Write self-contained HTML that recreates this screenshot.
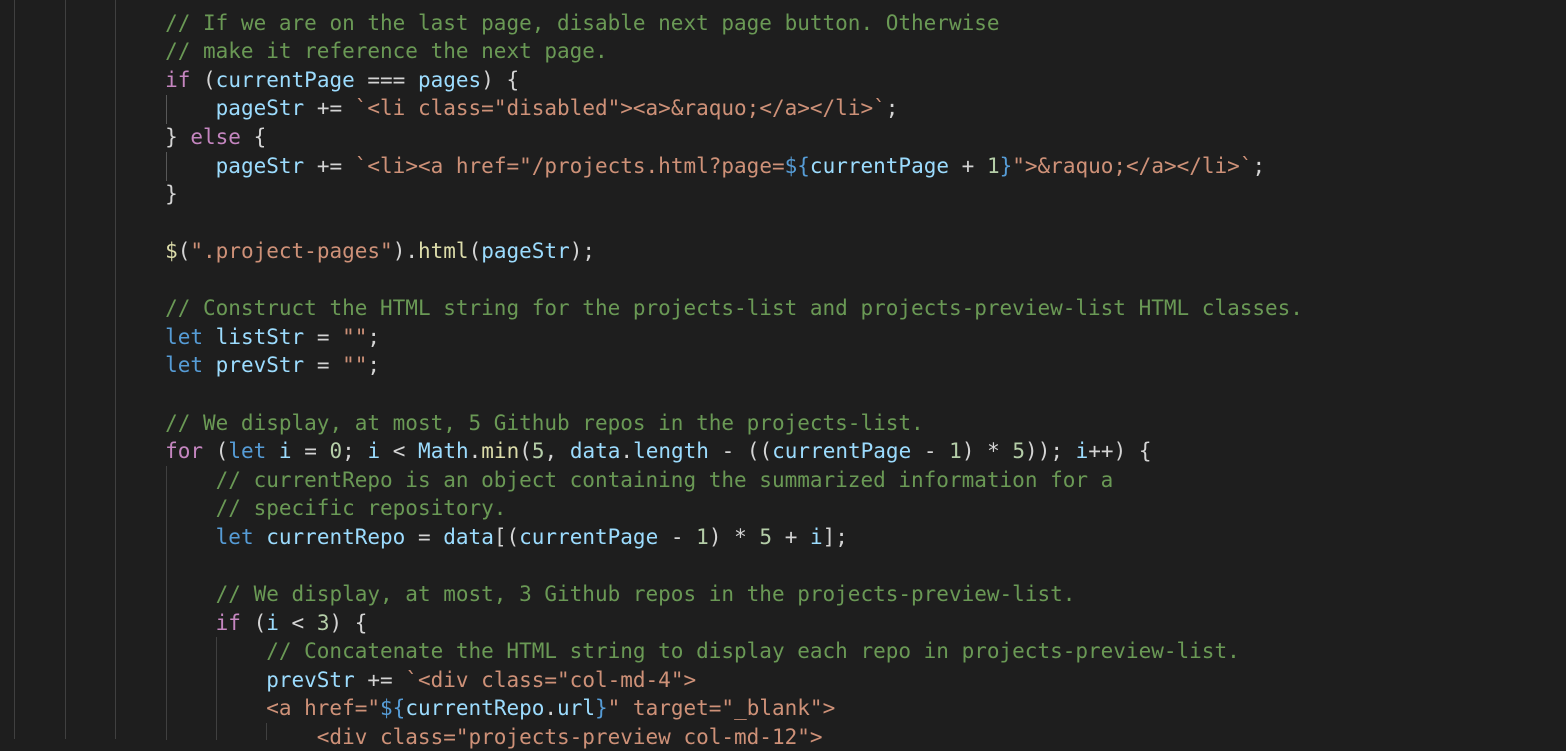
<!DOCTYPE html>
<html><head><meta charset="utf-8"><style>
html,body{margin:0;padding:0;background:#1e1e1e;width:1566px;height:739px;overflow:hidden}
.g{position:absolute;width:1px;background:#404040}
pre{position:absolute;left:114.5px;top:8.7px;margin:0;font-family:"DejaVu Sans Mono","Liberation Mono",monospace;font-size:21px;line-height:28.57px;color:#d4d4d4;white-space:pre}
.c{color:#6a9955}.k{color:#c586c0}.b{color:#569cd6}.v{color:#9cdcfe}.s{color:#ce9178}.f{color:#dcdcaa}.n{color:#b5cea8}
</style></head><body>
<div class="g" style="left:14px;top:0;height:739px"></div>
<div class="g" style="left:65px;top:0;height:739px"></div>
<div class="g" style="left:115px;top:0;height:739px"></div>
<div class="g" style="left:166px;top:95px;height:29px;background:#585858"></div>
<div class="g" style="left:166px;top:152px;height:29px;background:#585858"></div>
<div class="g" style="left:166px;top:466px;height:274px"></div>
<div class="g" style="left:216px;top:637px;height:103px"></div>
<div class="g" style="left:266px;top:723px;height:17px"></div>
<pre>    <span class="c">// If we are on the last page, disable next page button. Otherwise</span>
    <span class="c">// make it reference the next page.</span>
    <span class="k">if</span> (<span class="v">currentPage</span> === <span class="v">pages</span>) {
        <span class="v">pageStr</span> += <span class="s">`&lt;li class="disabled"&gt;&lt;a&gt;&amp;raquo;&lt;/a&gt;&lt;/li&gt;`</span>;
    } <span class="k">else</span> {
        <span class="v">pageStr</span> += <span class="s">`&lt;li&gt;&lt;a href="/projects.html?page=</span><span class="b">${</span><span class="v">currentPage</span> + <span class="n">1</span><span class="b">}</span><span class="s">"&gt;&amp;raquo;&lt;/a&gt;&lt;/li&gt;`</span>;
    }

    <span class="f">$</span>(<span class="s">".project-pages"</span>).<span class="f">html</span>(<span class="v">pageStr</span>);

    <span class="c">// Construct the HTML string for the projects-list and projects-preview-list HTML classes.</span>
    <span class="b">let</span> <span class="v">listStr</span> = <span class="s">""</span>;
    <span class="b">let</span> <span class="v">prevStr</span> = <span class="s">""</span>;

    <span class="c">// We display, at most, 5 Github repos in the projects-list.</span>
    <span class="k">for</span> (<span class="b">let</span> <span class="v">i</span> = <span class="n">0</span>; <span class="v">i</span> &lt; <span class="v">Math</span>.<span class="f">min</span>(<span class="n">5</span>, <span class="v">data</span>.<span class="v">length</span> - ((<span class="v">currentPage</span> - <span class="n">1</span>) * <span class="n">5</span>)); <span class="v">i</span>++) {
        <span class="c">// currentRepo is an object containing the summarized information for a</span>
        <span class="c">// specific repository.</span>
        <span class="b">let</span> <span class="v">currentRepo</span> = <span class="v">data</span>[(<span class="v">currentPage</span> - <span class="n">1</span>) * <span class="n">5</span> + <span class="v">i</span>];

        <span class="c">// We display, at most, 3 Github repos in the projects-preview-list.</span>
        <span class="k">if</span> (<span class="v">i</span> &lt; <span class="n">3</span>) {
            <span class="c">// Concatenate the HTML string to display each repo in projects-preview-list.</span>
            <span class="v">prevStr</span> += <span class="s">`&lt;div class="col-md-4"&gt;</span>
<span class="s">            &lt;a href="</span><span class="b">${</span><span class="v">currentRepo</span>.<span class="v">url</span><span class="b">}</span><span class="s">" target="_blank"&gt;</span>
<span class="s">                &lt;div class="projects-preview col-md-12"&gt;</span></pre>
</body></html>
